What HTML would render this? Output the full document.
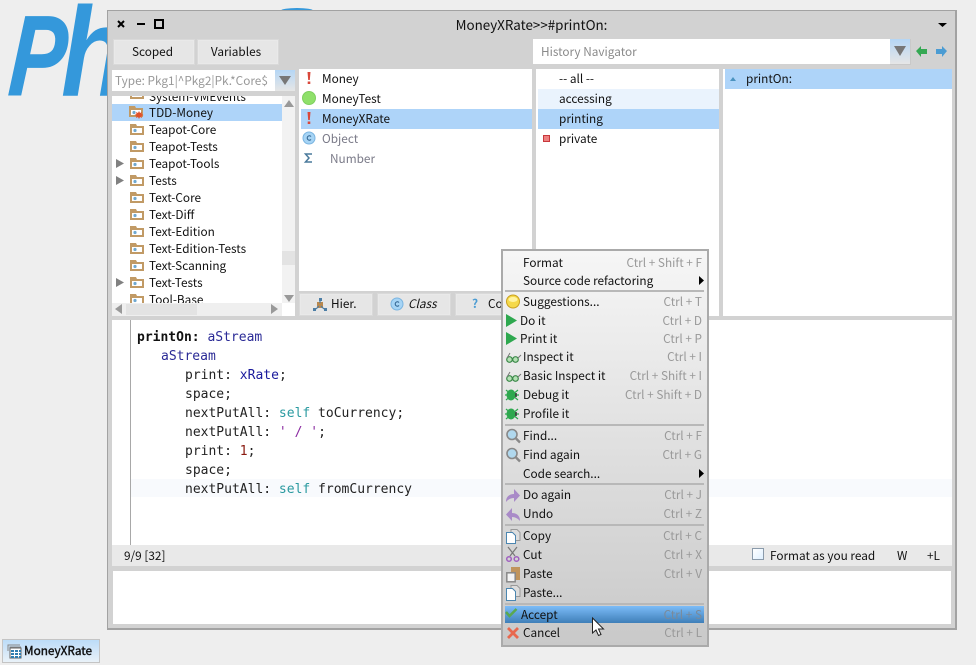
<!DOCTYPE html>
<html><head><meta charset="utf-8"><style>
html,body{margin:0;padding:0;width:976px;height:665px;overflow:hidden;background:#eee}
*{box-sizing:border-box}
div,span.t{position:absolute}
.t{font-family:"Noto Sans CJK JP","Liberation Sans",sans-serif;font-size:11.8px;line-height:16px;color:#111;white-space:nowrap}
.m{font-family:"DejaVu Sans Mono","Liberation Mono",monospace;font-size:13px;line-height:16px;color:#222;white-space:pre;position:absolute;left:137px}
.g{color:#8a8a8a}
.k{position:absolute;right:5px;text-align:right;color:#999;font-family:"Noto Sans CJK JP","Liberation Sans",sans-serif;font-size:11.8px;line-height:16px;white-space:nowrap}
.btn{background:#e6e6e6;border:1px solid #d9d9d9;box-shadow:inset 0 0 0 1px #e9e9e9}
.w{background:#fff}
.sep{left:2px;width:199px;height:2px;background:#b8b8b8;position:absolute}
svg{position:absolute;overflow:visible}
</style></head><body>
<span class="t" style="left:7px;top:0px;font-family:'Liberation Sans',sans-serif;font-weight:700;font-style:italic;font-size:114px;line-height:114px;color:#3498db;-webkit-text-stroke:1px #3498db;transform:skewX(-4deg) scaleX(.75);transform-origin:0 97px">P</span>
<span class="t" style="left:61px;top:-11px;font-family:'Liberation Sans',sans-serif;font-weight:700;font-style:italic;font-size:127px;line-height:127px;color:#3498db;transform:scaleX(.85);transform-origin:left top">h</span>
<div style="left:281px;top:8px;width:32px;height:5px;border-radius:50%;background:#3498db"></div>

<!-- window -->
<div style="left:107px;top:10px;width:850px;height:620px;background:#d2d2d2;border:1px solid #a2a2a2;border-width:1px 2px 2px 1px"></div>
<svg style="left:0;top:0" width="976" height="665">
<path d="M118 21l6 6M124 21l-6 6" stroke="#000" stroke-width="2"/>
<rect x="137" y="23" width="8" height="2" fill="#000"/>
<rect x="155" y="20" width="8" height="8" fill="none" stroke="#000" stroke-width="2"/>
<path d="M938 23h9l-4.500 4z" fill="#000"/>
</svg>
<span class="t" style="left:355px;width:353px;text-align:center;top:16px;font-size:13.4px">MoneyXRate&gt;&gt;#printOn:</span>

<div class="btn" style="left:113px;top:39px;width:82px;height:26px"></div><span class="t" style="left:113px;width:79px;text-align:center;top:44px">Scoped</span>
<div class="btn" style="left:197px;top:39px;width:82px;height:26px"></div><span class="t" style="left:197px;width:78px;text-align:center;top:44px">Variables</span>

<div class="w" style="left:533px;top:39px;width:357px;height:25px"></div>
<span class="t g" style="left:541px;top:44px">History Navigator</span>
<div style="left:890px;top:39px;width:21px;height:26px;background:linear-gradient(#b5d6f5,#e6e6e6);border:solid #c9c9c9;border-width:0 1px 1px 0"></div>
<svg style="left:0;top:0" width="976" height="665">
<path d="M894 46h12l-6 10z" fill="#777"/>
<path d="M916 51l5-5v3h6v5h-6v3z" fill="#35a853"/>
<path d="M947 51l-5-5v3h-6v5h6v3z" fill="#4b9cd3"/>
</svg>

<!-- package filter -->
<div class="w" style="left:112px;top:70px;width:163px;height:21px"></div>
<span class="t g" style="left:115px;top:73px;color:#999">Type: Pkg1|^Pkg2|Pk.*Core$</span>
<div style="left:275px;top:70px;width:20px;height:21px;background:linear-gradient(#b5d6f5,#e6e6e6)"></div>
<svg style="left:0;top:0" width="976" height="665"><path d="M279 76h12l-6 9z" fill="#777"/></svg>

<!-- package list -->
<div style="left:112px;top:96px;width:183px;height:220px;background:#fff;overflow:hidden">
<div style="left:0;top:8px;width:170px;height:17px;background:#aed4f9"></div>
<span class="t" style="left:37px;top:-7px">System-VMEvents</span>
<span class="t" style="left:37px;top:9px">TDD-Money</span>
<span class="t" style="left:37px;top:26px">Teapot-Core</span>
<span class="t" style="left:37px;top:43px">Teapot-Tests</span>
<span class="t" style="left:37px;top:60px">Teapot-Tools</span>
<span class="t" style="left:37px;top:77px">Tests</span>
<span class="t" style="left:37px;top:94px">Text-Core</span>
<span class="t" style="left:37px;top:111px">Text-Diff</span>
<span class="t" style="left:37px;top:128px">Text-Edition</span>
<span class="t" style="left:37px;top:145px">Text-Edition-Tests</span>
<span class="t" style="left:37px;top:162px">Text-Scanning</span>
<span class="t" style="left:37px;top:179px">Text-Tests</span>
<span class="t" style="left:37px;top:196px">Tool-Base</span>
<div style="left:0;top:207px;width:170px;height:13px;background:#efefef"></div>
<div style="left:170px;top:0;width:13px;height:207px;background:#f2f2f2"></div>
<div style="left:170px;top:155px;width:13px;height:14px;background:#e3e3e3"></div>
<div style="left:14px;top:208px;width:71px;height:11px;background:#e3e3e3"></div>
</div>
<svg style="left:0;top:0" width="976" height="665">
<defs><g id="f"><path d="M0 0h6l1 2h7v9H0z" fill="#c19a65"/><rect x="2" y="4" width="10" height="5" fill="#fff"/><circle cx="5" cy="6.500" r="1.600" fill="#6fa8d0"/></g></defs>
<rect x="130" y="96" width="14" height="3" fill="#c19a65"/><rect x="132" y="96" width="10" height="1" fill="#fff"/>
<use href="#f" x="129" y="106"/><use href="#f" x="130" y="124"/><use href="#f" x="130" y="141"/><use href="#f" x="130" y="158"/><use href="#f" x="130" y="175"/><use href="#f" x="130" y="192"/><use href="#f" x="130" y="209"/><use href="#f" x="130" y="226"/><use href="#f" x="130" y="243"/><use href="#f" x="130" y="260"/><use href="#f" x="130" y="277"/>
<path d="M130 294h6l1 2h7v7h-14z" fill="#c19a65"/><rect x="132" y="298" width="10" height="5" fill="#fff"/><circle cx="135" cy="300.500" r="1.600" fill="#6fa8d0"/>
<path d="M139 111l1 2 2-1-.5 2 2 1-2 1 .5 2-2-1-1 2-1-2-2 1 .5-2-2-1 2-1-.5-2 2 1z" fill="#e0502a"/>
<path d="M116 159l8 4.500-8 4.500zM116 176l8 4.500-8 4.500zM116 278l8 4.500-8 4.500z" fill="#808080"/>
<path d="M289 100l-5 7h10zM284 295h10l-5 7zM122 304l-7 5 7 5zM271 304l7 5-7 5z" fill="#999"/>
</svg>

<!-- class list -->
<div class="w" style="left:299px;top:69px;width:233px;height:222px"></div>
<div style="left:301px;top:109px;width:231px;height:20px;background:#aed4f9"></div>
<span class="t" style="left:322px;top:71px">Money</span>
<span class="t" style="left:322px;top:91px">MoneyTest</span>
<span class="t" style="left:322px;top:111px">MoneyXRate</span>
<span class="t" style="left:322px;top:131px;color:#7a7a88">Object</span>
<span class="t" style="left:330px;top:151px;color:#7a7a88">Number</span>
<svg style="left:0;top:0" width="976" height="665">
<path d="M307.500 72h3l-.7 8h-1.600zM307.700 81.500h2.600v2.500h-2.600zM307.500 112h3l-.7 8h-1.600zM307.700 121.500h2.600v2.500h-2.600z" fill="#d9483b"/>
<circle cx="309" cy="98" r="6.500" fill="#8fe06a" stroke="#7fcf60"/>
<circle cx="309" cy="138" r="6" fill="#a6d4f5" stroke="#7ab4e0"/>
<path d="M311 136.500a2.200 2.200 0 1 0 0 3" fill="none" stroke="#2b5f8c" stroke-width="1"/>
<path d="M312 154h-6.500l3.500 4-3.500 4h6.500" fill="none" stroke="#4a7a9c" stroke-width="1.500"/>
</svg>

<!-- class buttons -->
<div class="btn" style="left:299px;top:293px;width:74px;height:23px"></div>
<div class="btn" style="left:377px;top:293px;width:74px;height:23px"></div>
<div class="btn" style="left:455px;top:293px;width:50px;height:23px"></div>
<span class="t" style="left:331px;top:296px">Hier.</span>
<span class="t" style="left:408px;top:296px;font-style:italic">Class</span>
<span class="t" style="left:488px;top:296px">Co</span>
<span class="t" style="left:472px;top:296px;color:#4b9cd3;font-weight:700">?</span>
<svg style="left:0;top:0" width="976" height="665">
<rect x="317" y="302" width="6" height="6" fill="#b9884e"/>
<path d="M320 299v4M316 309l3-3M324 309l-3-3" stroke="#4c7ea6" stroke-width="1.200"/>
<rect x="319" y="298" width="3" height="3" fill="#4c7ea6"/><rect x="313" y="308" width="3" height="3" fill="#4c7ea6"/><rect x="324" y="308" width="3" height="3" fill="#4c7ea6"/>
<circle cx="397" cy="304" r="6" fill="#a6d4f5" stroke="#7ab4e0"/>
<path d="M399 302.500a2.200 2.200 0 1 0 0 3" fill="none" stroke="#2b5f8c" stroke-width="1"/>
</svg>

<!-- protocols -->
<div class="w" style="left:536px;top:69px;width:183px;height:247px"></div>
<div style="left:538px;top:89px;width:181px;height:20px;background:#eaf3fd"></div>
<div style="left:538px;top:109px;width:181px;height:20px;background:#aed4f9"></div>
<span class="t" style="left:559px;top:71px">-- all --</span>
<span class="t" style="left:559px;top:91px">accessing</span>
<span class="t" style="left:559px;top:111px">printing</span>
<span class="t" style="left:559px;top:131px">private</span>
<div style="left:543px;top:135px;width:7px;height:7px;background:#ee8080;border:1px solid #c8383c"></div>

<!-- methods -->
<div class="w" style="left:723px;top:69px;width:229px;height:247px"></div>
<div style="left:725px;top:69px;width:227px;height:20px;background:#aed4f9"></div>
<span class="t" style="left:746px;top:71px">printOn:</span>
<svg style="left:0;top:0" width="976" height="665"><path d="M730 81l3-4 3 4z" fill="#4b93c0"/></svg>

<!-- code -->
<div class="w" style="left:112px;top:320px;width:840px;height:225px"></div>
<div style="left:130px;top:320px;width:1px;height:225px;background:#a8a8a8"></div>
<div style="left:131px;top:479px;width:821px;height:18px;background:#f8fafd"></div>
<div class="m" style="top:330px;font-weight:700;color:#111">printOn:<span style="font-weight:400;color:#2a2a96"> aStream</span></div>
<div class="m" style="left:161px;top:349px;color:#2a2a96">aStream</div>
<div class="m" style="left:185px;top:368px">print: <span style="color:#1a1a9c">xRate</span>;</div>
<div class="m" style="left:185px;top:387px">space;</div>
<div class="m" style="left:185px;top:406px">nextPutAll: <span style="color:#2a9aa0">self</span> toCurrency;</div>
<div class="m" style="left:185px;top:425px">nextPutAll: <span style="color:#8a2aa0">' / '</span>;</div>
<div class="m" style="left:185px;top:444px">print: <span style="color:#8a1a10">1</span>;</div>
<div class="m" style="left:185px;top:463px">space;</div>
<div class="m" style="left:185px;top:482px">nextPutAll: <span style="color:#2a9aa0">self</span> fromCurrency</div>

<!-- status -->
<div style="left:112px;top:545px;width:840px;height:21px;background:#e9e9e9"></div>
<span class="t" style="left:124px;top:548px">9/9 [32]</span>
<div style="left:752px;top:548px;width:12px;height:12px;background:linear-gradient(135deg,#fff,#dff0ff);border:1px solid #8a9aaa"></div>
<span class="t" style="left:770px;top:548px">Format as you read</span>
<span class="t" style="left:897px;top:548px">W</span>
<span class="t" style="left:927px;top:548px">+L</span>
<div class="w" style="left:113px;top:571px;width:838px;height:53px"></div>

<!-- menu -->
<div style="left:501px;top:249px;width:208px;height:398px;background:linear-gradient(#f6f6f6,#c9c9c9);border:2px solid #aaa;overflow:hidden">
<div class="sep" style="top:39px"></div>
<div class="sep" style="top:173px"></div>
<div class="sep" style="top:232px"></div>
<div class="sep" style="top:273px"></div>
<div class="sep" style="top:352px"></div>
<div style="left:2px;top:355px;width:199px;height:17px;background:linear-gradient(#7cbcf8,#3f7fb8)"></div>

<span class="t" style="left:20px;top:4px">Format</span><span class="k" style="top:4px">Ctrl + Shift + F</span>
<span class="t" style="left:20px;top:22px">Source code refactoring</span>
<span class="t" style="left:20px;top:43px">Suggestions...</span><span class="k" style="top:43px">Ctrl + T</span>
<span class="t" style="left:17px;top:62px">Do it</span><span class="k" style="top:62px">Ctrl + D</span>
<span class="t" style="left:17px;top:80px">Print it</span><span class="k" style="top:80px">Ctrl + P</span>
<span class="t" style="left:20px;top:98px">Inspect it</span><span class="k" style="top:98px">Ctrl + I</span>
<span class="t" style="left:20px;top:117px">Basic Inspect it</span><span class="k" style="top:117px">Ctrl + Shift + I</span>
<span class="t" style="left:20px;top:136px">Debug it</span><span class="k" style="top:136px">Ctrl + Shift + D</span>
<span class="t" style="left:20px;top:155px">Profile it</span>
<span class="t" style="left:20px;top:177px">Find...</span><span class="k" style="top:177px">Ctrl + F</span>
<span class="t" style="left:20px;top:196px">Find again</span><span class="k" style="top:196px">Ctrl + G</span>
<span class="t" style="left:20px;top:215px">Code search...</span>
<span class="t" style="left:20px;top:236px">Do again</span><span class="k" style="top:236px">Ctrl + J</span>
<span class="t" style="left:20px;top:255px">Undo</span><span class="k" style="top:255px">Ctrl + Z</span>
<span class="t" style="left:20px;top:277px">Copy</span><span class="k" style="top:277px">Ctrl + C</span>
<span class="t" style="left:20px;top:296px">Cut</span><span class="k" style="top:296px">Ctrl + X</span>
<span class="t" style="left:20px;top:315px">Paste</span><span class="k" style="top:315px">Ctrl + V</span>
<span class="t" style="left:20px;top:334px">Paste...</span>
<span class="t" style="left:18px;top:356px">Accept</span><span class="k" style="top:356px;color:#7a8a9a">Ctrl + S</span>
<span class="t" style="left:20px;top:374px">Cancel</span><span class="k" style="top:374px">Ctrl + L</span>
</div>
<svg style="left:0;top:0" width="976" height="665">
<path d="M699 276l5 4.500-5 4.500zM699 469l5 4.500-5 4.500z" fill="#000"/>
<circle cx="513" cy="301.500" r="6.500" fill="#f5d94a" stroke="#c9a020"/><ellipse cx="513" cy="299.500" rx="4.500" ry="2.500" fill="#fff3a0"/>
<path d="M506 314l11 6.500-11 6.500zM506 332l11 6.500-11 6.500z" fill="#2ea84f"/>
<g fill="#b5e0b5" stroke="#3c8a4a" stroke-width="1.200"><circle cx="509.500" cy="359.500" r="2.800"/><circle cx="515.500" cy="359.500" r="2.800"/></g><path d="M507 358l3-5M518 358l3-3" fill="none" stroke="#777"/>
<g fill="#b5e0b5" stroke="#3c8a4a" stroke-width="1.200"><circle cx="509.500" cy="378.500" r="2.800"/><circle cx="515.500" cy="378.500" r="2.800"/></g><path d="M507 377l3-5M518 377l3-3" fill="none" stroke="#777"/>
<ellipse cx="511" cy="395" rx="4.500" ry="5.500" fill="#2ea84f"/><path d="M506 390l12 10M506 400l12-10M505 395h14" stroke="#2ea84f" stroke-width="1.200"/><path d="M516 393v4" stroke="#333" stroke-width="1.500"/>
<ellipse cx="511" cy="414" rx="4.500" ry="5.500" fill="#2ea84f"/><path d="M506 409l12 10M506 419l12-10M505 414h14" stroke="#2ea84f" stroke-width="1.200"/><path d="M516 412v4" stroke="#333" stroke-width="1.500"/>
<circle cx="512" cy="434.500" r="5" fill="#b0d8ee" stroke="#888" stroke-width="1.600"/><path d="M516 438.500l4 4" stroke="#888" stroke-width="2.400"/>
<circle cx="512" cy="453.500" r="5" fill="#b0d8ee" stroke="#888" stroke-width="1.600"/><path d="M516 457.500l4 4" stroke="#888" stroke-width="2.400"/>
<path d="M506 502c0-6 4-8 8-8v-5l6 6.500-6 6.500v-4c-3 0-6 1.500-8 4z" fill="#a98ac8"/>
<path d="M520 521c0-6-4-8-8-8v-5l-6 6.500 6 6.500v-4c3 0 6 1.500 8 4z" fill="#a98ac8"/>
<path d="M511 529.500h6l3 3v8h-9z" fill="#ddd" stroke="#999"/><path d="M506.500 532.500h6l3 3v8h-9z" fill="#fff" stroke="#4b86b0"/>
<path d="M508 547l7 9M517 547l-7 9" stroke="#777" stroke-width="1.200"/><circle cx="509" cy="559" r="2.300" fill="none" stroke="#a060c0" stroke-width="1.500"/><circle cx="516.500" cy="559" r="2.300" fill="none" stroke="#a060c0" stroke-width="1.500"/>
<rect x="511" y="567" width="9" height="13" fill="#c0945c"/><rect x="506.800" y="572.800" width="8.400" height="9" fill="#f4f4f4" stroke="#888" stroke-width="1.500"/>
<path d="M511 585.500h6l3 3v8h-9z" fill="#ddd" stroke="#999"/><path d="M506.500 588.500h6l3 3v9h-9z" fill="#fff" stroke="#4b86b0"/>
<path d="M506 612l3.500 4 7-7" fill="none" stroke="#5aa850" stroke-width="2.500"/>
<path d="M508 628l10 10M518 628l-10 10" stroke="#e8684e" stroke-width="2.800"/>
<path d="M592.500 618v15l3.500-3 2.500 5.500 2.500-1-2.500-5.500h5z" fill="#fff" stroke="#222" stroke-width="1"/>
</svg>

<!-- taskbar -->
<div style="left:2px;top:639px;width:98px;height:24px;background:linear-gradient(#bcdcf8,#e9f1f8);border:1px solid #c4c4c4"></div>
<span class="t" style="left:24px;top:643px;-webkit-text-stroke:.4px #111">MoneyXRate</span>
<svg style="left:0;top:0" width="976" height="665">
<path d="M8 651v-6h12M10 653v-6h11" fill="none" stroke="#888" stroke-width="1"/>
<rect x="10" y="648" width="11" height="10" fill="#fff" stroke="#666" stroke-width="1"/>
<rect x="11" y="650" width="3" height="2" fill="#2f7db0"/><rect x="15" y="650" width="3" height="2" fill="#2f7db0"/><rect x="19" y="650" width="2" height="2" fill="#2f7db0"/>
<rect x="11" y="653" width="3" height="2" fill="#2f7db0"/><rect x="15" y="653" width="3" height="2" fill="#2f7db0"/><rect x="19" y="653" width="2" height="2" fill="#2f7db0"/>
<rect x="11" y="656" width="3" height="2" fill="#2f7db0"/><rect x="15" y="656" width="3" height="2" fill="#2f7db0"/><rect x="19" y="656" width="2" height="2" fill="#2f7db0"/>
</svg>
</body></html>
